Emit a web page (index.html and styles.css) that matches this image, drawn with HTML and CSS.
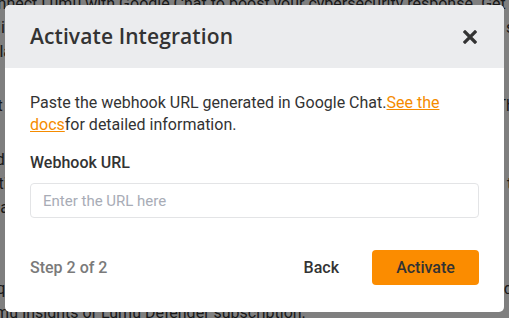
FILE: index.html
```html
<!DOCTYPE html>
<html lang="en">
<head>
  <meta charset="UTF-8">
  <meta name="viewport" content="width=device-width, initial-scale=1.0">
  <title>Google Chat - Activate Integration</title>
  <link rel="stylesheet" href="styles.css">
</head>
<body>
  <div class="page">
    <p class="intro">Connect Lumu with Google Chat to boost your cybersecurity response. Get insights</p>
    <p>Deliver Lumu incidents to the Google Chat spaces your team already uses, so that</p>
    <p>collaboration starts right where conversations happen.</p>
    <p class="gap">Get started by creating a webhook in the space where alerts should land. Then</p>
    <p class="gap">add the URL here and select which incidents should be forwarded.</p>
    <p>Notifications include the affected contact, the adversary and a link back to the portal.</p>
    <p>All alerts respect the filters that were configured for this integration.</p>
    <p class="gap-lg">Requirements: an active Google Workspace account with Chat enabled, and a</p>
    <p>Lumu Insights or Lumu Defender subscription.</p>
  </div>

  <div class="overlay">
    <div class="modal">
      <div class="modal-header">
        <h2>Activate Integration</h2>
        <button class="close" aria-label="Close">
          <svg width="14" height="14" viewBox="0 0 14 14">
            <path d="M2 2 L12 12 M12 2 L2 12" stroke="#333" stroke-width="3.2" stroke-linecap="square" fill="none"/>
          </svg>
        </button>
      </div>

      <div class="modal-body">
        <p class="hint">Paste the webhook URL generated in Google Chat.<a href="#">See the docs</a>for detailed information.</p>

        <label for="webhook">Webhook URL</label>
        <input type="text" id="webhook" placeholder="Enter the URL here">

        <div class="modal-footer">
          <span class="step">Step 2 of 2</span>
          <div class="actions">
            <button class="btn-back">Back</button>
            <button class="btn-activate">Activate</button>
          </div>
        </div>
      </div>
    </div>
  </div>
</body>
</html>
```

FILE: styles.css
```css
* {
  margin: 0;
  padding: 0;
  box-sizing: border-box;
}

body {
  font-family: Roboto, "Liberation Sans", sans-serif;
  color: #333333;
  background: #ffffff;
  overflow: hidden;
}

.page {
  margin-left: -22px;
  margin-top: -8px;
  font-size: 16px;
  line-height: 24px;
  white-space: nowrap;
}

.page .gap {
  margin-top: 30px;
}

.page .gap-lg {
  margin-top: 57px;
}

.overlay {
  position: fixed;
  top: 0;
  left: 0;
  width: 100%;
  height: 100%;
  background: rgba(0, 0, 0, 0.5);
  display: flex;
  justify-content: center;
  align-items: flex-start;
  padding-top: 5px;
}

.modal {
  width: 499px;
  background: #ffffff;
  border-radius: 5px;
  overflow: hidden;
}

.modal-header {
  height: 63px;
  background: #ebecee;
  display: flex;
  align-items: center;
  justify-content: space-between;
  padding: 0 25px;
}

.modal-header h2 {
  font-family: "Open Sans", sans-serif;
  font-size: 21px;
  font-weight: 600;
  color: #333333;
  letter-spacing: 0.1px;
  margin-top: -2px;
}

.close {
  background: none;
  border: none;
  cursor: pointer;
  display: flex;
  margin-right: 2px;
}

.modal-body {
  padding: 24px 25px 27px;
}

.hint {
  font-size: 16px;
  line-height: 22px;
  color: #333333;
}

.hint a {
  color: #f58b00;
  text-decoration: underline;
}

label {
  display: block;
  margin-top: 16px;
  font-size: 16px;
  font-weight: 500;
  line-height: 22px;
  color: #333333;
}

input {
  display: block;
  width: 100%;
  height: 35px;
  margin-top: 9px;
  padding: 0 12px;
  border: 1px solid #e3e4e6;
  border-radius: 4px;
  font-family: Roboto, sans-serif;
  font-size: 15px;
  color: #333333;
}

input::placeholder {
  color: #a8acb6;
}

.modal-footer {
  margin-top: 32px;
  display: flex;
  align-items: center;
  justify-content: space-between;
}

.step {
  font-size: 16px;
  font-weight: 500;
  color: #7a7a7a;
}

.actions {
  display: flex;
  align-items: center;
  gap: 33px;
}

.btn-back,
.btn-activate {
  font-family: Roboto, sans-serif;
  font-size: 16px;
  font-weight: 500;
  color: #333333;
  border: none;
  cursor: pointer;
}

.btn-back {
  background: none;
}

.btn-activate {
  width: 107px;
  height: 35px;
  background: #fb8c00;
  border-radius: 4px;
}
```
